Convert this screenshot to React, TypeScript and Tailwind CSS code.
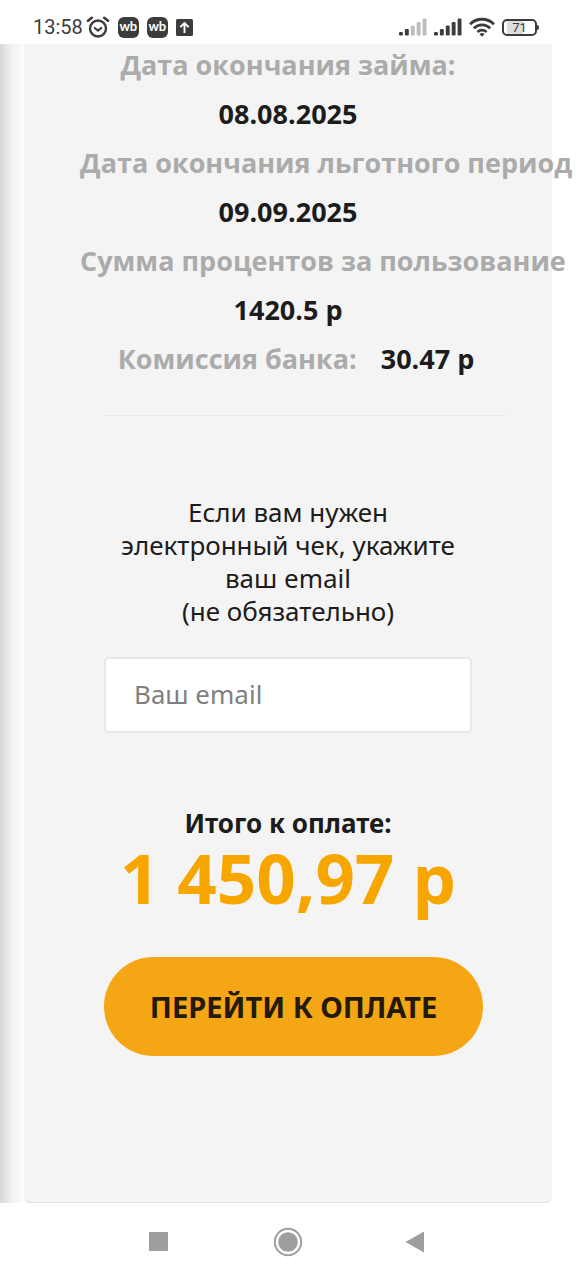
import type { ReactNode } from "react";

const DETAILS = [
  { label: "Дата окончания займа:", value: "08.08.2025" },
  { label: "Дата окончания льготного период", value: "09.09.2025" },
  { label: "Сумма процентов за пользование", value: "1420.5 р" },
];

function AlarmIcon() {
  return (
    <svg width="24" height="22" viewBox="0 0 24 22" fill="none" stroke="#3c3c3c" strokeLinecap="round">
      <circle cx="12" cy="12.5" r="8" strokeWidth="2.4" />
      <path d="M8.8 12l3.2 2.6 3.2-2.6" strokeWidth="2.2" />
      <path d="M2 4.8L5.8 1.8M22 4.8L18.2 1.8" strokeWidth="2.6" />
    </svg>
  );
}

function ShopBadge() {
  return (
    <span className="flex h-[21px] w-[21px] items-center justify-center rounded-md bg-[#3c3c3c] pb-0.5 font-['Lato',sans-serif] text-[13px] leading-none font-bold text-white">
      wb
    </span>
  );
}

function UploadIcon() {
  return (
    <svg width="17" height="17" viewBox="0 0 17 17">
      <rect width="17" height="17" rx="1.5" fill="#3c3c3c" />
      <path d="M8.5 14V4.2M4.3 8.2l4.2-4.2 4.2 4.2" fill="none" stroke="#fff" strokeWidth="1.9" />
    </svg>
  );
}

function SignalIcon({ level }: { level: number }) {
  const bars = [3.5, 6.5, 10, 13.5, 17];
  return (
    <svg width="28" height="18" viewBox="0 0 28 18">
      {bars.map((h, i) => (
        <rect key={h} x={i * 5.9} y={17.5 - h} width="3.9" height={h} rx="1.2" fill={i < level ? "#3c3c3c" : "#bdbdbd"} />
      ))}
    </svg>
  );
}

function WifiIcon() {
  return (
    <svg width="26" height="20" viewBox="0 0 26 20" fill="none" stroke="#3c3c3c" strokeWidth="2.8">
      <path d="M1 7.2a17 17 0 0 1 24 0" />
      <path d="M4.8 11.2a11.6 11.6 0 0 1 16.4 0" />
      <path d="M8.5 15a6.4 6.4 0 0 1 9 0" />
      <path d="M13 19.8l-2.5-2.5a3.6 3.6 0 0 1 5 0z" fill="#3c3c3c" stroke="none" />
    </svg>
  );
}

function Battery() {
  return (
    <span className="flex items-center">
      <span className="flex h-[17px] w-[35px] items-center justify-center rounded-[5px] border-2 border-[#3c3c3c] bg-[linear-gradient(90deg,#fff_10%,#dedede_10%,#dedede_60%,#fff_60%)] text-[13px] leading-none">
        71
      </span>
      <span className="h-[5px] w-[2px] rounded-r bg-[#3c3c3c]" />
    </span>
  );
}

function StatusBar() {
  return (
    <header className="flex h-11 shrink-0 items-center justify-between bg-white pt-2.5 pr-[37px] pl-[33px] font-['Roboto',sans-serif] text-[#3c3c3c]">
      <div className="flex items-center gap-2">
        <div className="flex items-center gap-[3px]">
          <span className="text-xl">13:58</span>
          <AlarmIcon />
        </div>
        <ShopBadge />
        <ShopBadge />
        <UploadIcon />
      </div>
      <div className="flex items-center gap-[7px]">
        <SignalIcon level={2} />
        <SignalIcon level={5} />
        <WifiIcon />
        <Battery />
      </div>
    </header>
  );
}

function NavButton({ label, children }: { label: string; children: ReactNode }) {
  return (
    <button type="button" aria-label={label} className="flex h-12 w-12 items-center justify-center">
      {children}
    </button>
  );
}

function NavBar() {
  return (
    <nav className="flex h-[77px] shrink-0 items-center justify-center gap-20 bg-white">
      <NavButton label="Недавние">
        <svg width="22" height="19" viewBox="0 0 22 19" fill="#9e9e9e">
          <rect width="19" height="19" />
        </svg>
      </NavButton>
      <NavButton label="Домой">
        <svg width="30" height="30" viewBox="0 0 30 30">
          <circle cx="15" cy="15" r="13.2" fill="none" stroke="#9e9e9e" strokeWidth="2" />
          <circle cx="15" cy="15" r="9.8" fill="#9e9e9e" />
        </svg>
      </NavButton>
      <NavButton label="Назад">
        <svg width="23" height="22" viewBox="0 0 23 22" fill="#9e9e9e">
          <path d="M0.5 11L19 0.5v21z" />
        </svg>
      </NavButton>
    </nav>
  );
}

export default function App() {
  return (
    <div className="flex min-h-screen flex-col bg-white font-['Noto_Sans','Open_Sans',sans-serif] text-[#1c1c1c]">
      <StatusBar />

      <main className="flex flex-1 overflow-x-clip overflow-y-clip">
        {/* Shadow of the page underneath */}
        <div className="w-6 shrink-0 bg-linear-to-r from-[#d8d8d8] via-[#f2f2f2] to-[#fdfdfd]" />

        <section className="mr-6 min-w-0 flex-1 rounded-b-md border-b border-[#e2e2e2] bg-[#f4f4f4]">
          <dl className="-mt-1 px-14 text-center font-['Open_Sans',sans-serif] text-[27px] leading-[49px] font-bold whitespace-nowrap">
            {DETAILS.map(({ label, value }) => (
              <div key={label}>
                <dt className="text-[#ababab]">{label}</dt>
                <dd>{value}</dd>
              </div>
            ))}
            <div className="flex justify-center gap-6 pl-4">
              <dt className="text-[#ababab]">Комиссия банка:</dt>
              <dd>30.47 р</dd>
            </div>
          </dl>

          <hr className="mt-8 mr-[46px] ml-20 border-[#e8e8e8]" />

          <form className="pt-20 pb-20" onSubmit={(e) => e.preventDefault()}>
            <div className="px-20">
              <label htmlFor="email" className="block text-center text-[26px] leading-[33px]">
                Если вам нужен электронный чек, укажите ваш email
                <br />
                (не обязательно)
              </label>
              <input
                id="email"
                type="email"
                placeholder="Ваш email"
                className="mt-[29px] h-19 w-full rounded-[5px] border-2 border-[#e8e8e8] bg-white px-7 pb-0.5 text-[26px] placeholder:text-[#808080]"
              />
            </div>

            <p className="mt-18 text-center text-[26px] leading-9 font-bold">Итого к оплате:</p>
            <p className="text-center text-[69px] leading-[72px] font-bold text-[#f7a600]">1 450,97 р</p>

            <div className="mt-11 pr-[69px] pl-20">
              <button
                type="submit"
                className="h-[99px] w-full rounded-full bg-[#f4a614] text-[29px] font-bold whitespace-nowrap text-[#241a0c]"
              >
                ПЕРЕЙТИ К ОПЛАТЕ
              </button>
            </div>
          </form>
        </section>
      </main>

      <NavBar />
    </div>
  );
}
